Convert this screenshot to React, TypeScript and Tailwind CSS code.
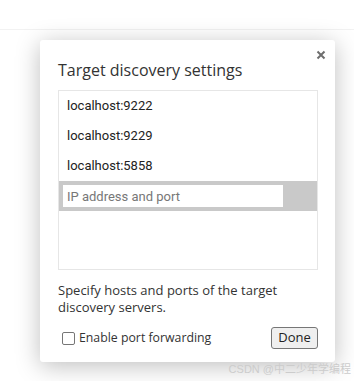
import React from 'react';

const hosts = ['localhost:9222', 'localhost:9229', 'localhost:5858'];

export default function App() {
  return (
    <div className="relative w-[354px] h-[381px] overflow-hidden bg-white">
      {/* faint line of the page behind */}
      <div className="h-[30px] border-b border-[#f2f2f2]" />

      {/* Dialog */}
      <div className="relative ml-[40px] mt-[10px] w-[295px] rounded-[3px] bg-white pl-[18px] pr-[17px] pb-[13px] shadow-[0_4px_24px_rgba(0,0,0,0.26)]">
        <button className="absolute right-[7px] top-[8px] flex h-[14px] w-[14px] items-center justify-center text-[#6e6e6e]">
          <svg width="10" height="10" viewBox="0 0 10 10">
            <path d="M1.5 1.5L8.5 8.5M8.5 1.5L1.5 8.5" stroke="currentColor" strokeWidth="2" />
          </svg>
        </button>

        <h2 className="pt-[18px] text-[16px] leading-[24px] text-[#333] font-['Open_Sans',sans-serif]">
          Target discovery settings
        </h2>

        {/* Host list */}
        <div className="mt-[8px] h-[180px] border border-[#e6e6e6] font-['Roboto',sans-serif] text-[13px] text-[#222]">
          {hosts.map((h) => (
            <div key={h} className="flex h-[30px] items-center pl-[8px]">
              {h}
            </div>
          ))}
          <div className="flex h-[30px] items-center bg-[#c9c9c9] pl-[4px]">
            <input
              className="h-[22px] w-[220px] bg-white px-[4px] text-[13px] text-[#222] outline-none placeholder:text-[#777]"
              placeholder="IP address and port"
            />
          </div>
        </div>

        <p className="mt-[12px] text-[13px] leading-[17px] text-[#333] font-['Open_Sans',sans-serif]">
          Specify hosts and ports of the target discovery servers.
        </p>

        <div className="mt-[11px] flex items-center justify-between">
          <label className="flex items-center pl-[4px] text-[12.3px] text-[#333] font-['Open_Sans',sans-serif]">
            <span className="mr-[4px] h-[13px] w-[13px] rounded-[2px] border border-[#767676] bg-white" />
            Enable port forwarding
          </label>
          <button className="h-[22px] w-[47px] rounded-[3px] border border-[#767676] bg-[#efefef] text-[13px] text-[#222] font-['Open_Sans',sans-serif]">
            Done
          </button>
        </div>
      </div>

      {/* watermark */}
      <div className="absolute right-[3px] top-[361px] text-[11px] text-[#cccccc] font-['Liberation_Sans','Noto_Sans_CJK_SC',sans-serif]">
        CSDN @中二少年学编程
      </div>
    </div>
  );
}
